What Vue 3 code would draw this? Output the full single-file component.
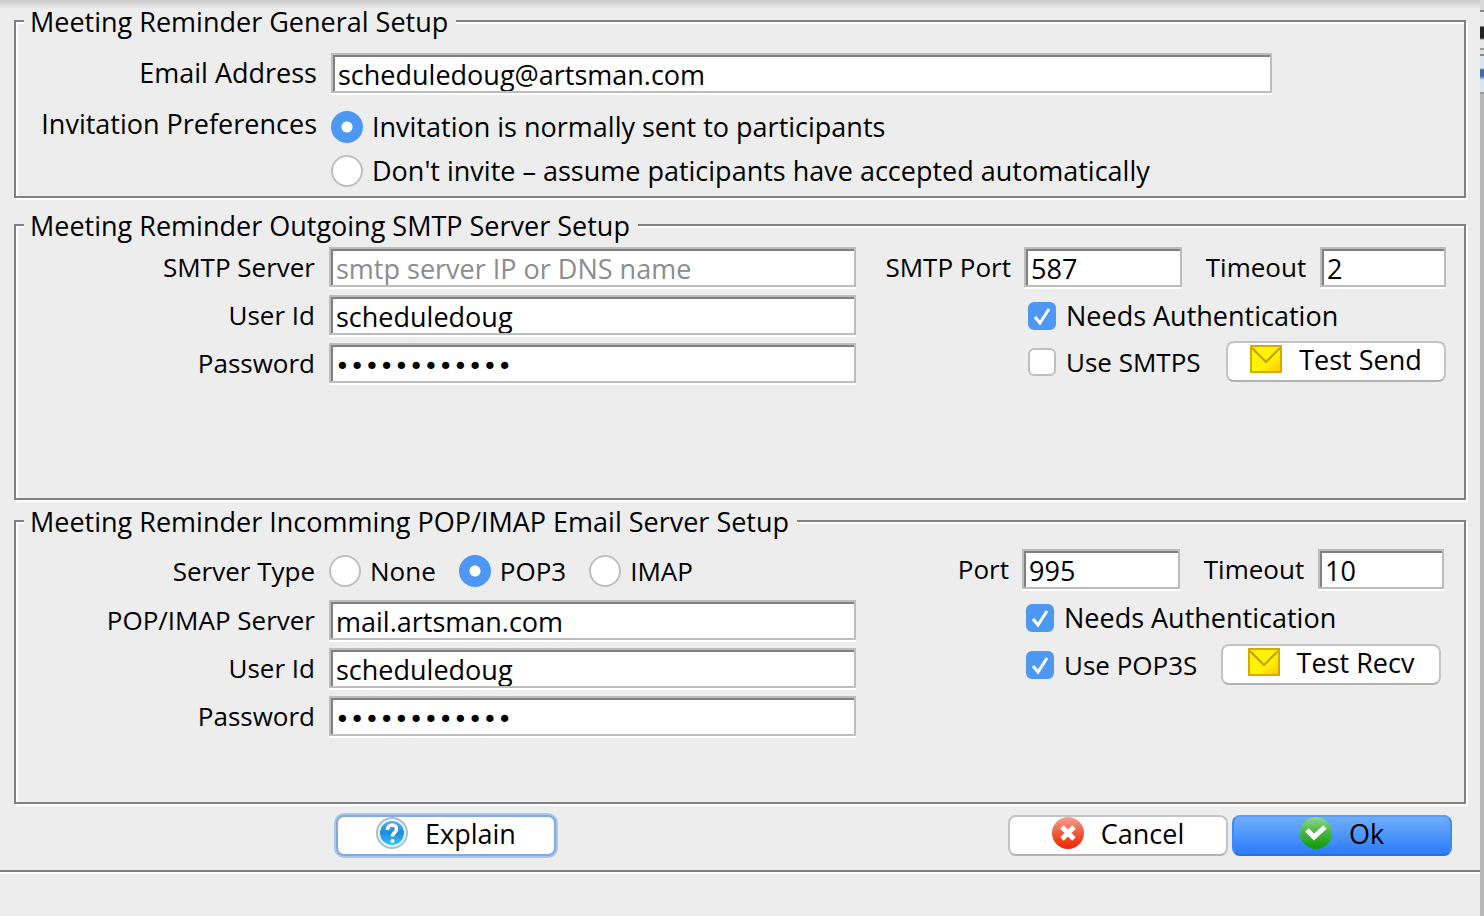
<script setup>
import { reactive } from 'vue'

const form = reactive({
  email: 'scheduledoug@artsman.com',
  invite: 'send',
  smtp: { server: '', user: 'scheduledoug', password: 'abcdefghijkl', port: '587', timeout: '2', auth: true, secure: false },
  pop: { type: 'pop3', server: 'mail.artsman.com', user: 'scheduledoug', password: 'abcdefghijkl', port: '995', timeout: '10', auth: true, secure: true },
})
</script>

<template>
  <div class="window">
    <form class="dialog" @submit.prevent>
      <div class="groups">
        <fieldset class="group general">
          <legend>Meeting Reminder General Setup</legend>
          <div class="row wide">
            <label class="name" for="email">Email Address</label>
            <input id="email" v-model="form.email" class="field" type="text">
          </div>
          <div class="row prefs" role="radiogroup" aria-labelledby="prefs">
            <span id="prefs" class="name">Invitation Preferences</span>
            <div class="stack">
              <label class="choice"><input v-model="form.invite" type="radio" name="invite" value="send">Invitation is normally sent to participants</label>
              <label class="choice"><input v-model="form.invite" type="radio" name="invite" value="assume">Don't invite – assume paticipants have accepted automatically</label>
            </div>
          </div>
        </fieldset>

        <fieldset class="group smtp">
          <legend>Meeting Reminder Outgoing SMTP Server Setup</legend>
          <div class="columns">
            <div class="account">
              <div class="row">
                <label class="name" for="smtp-server">SMTP Server</label>
                <input id="smtp-server" v-model="form.smtp.server" class="field" type="text" placeholder="smtp server IP or DNS name">
              </div>
              <div class="row">
                <label class="name" for="smtp-user">User Id</label>
                <input id="smtp-user" v-model="form.smtp.user" class="field" type="text">
              </div>
              <div class="row">
                <label class="name" for="smtp-password">Password</label>
                <input id="smtp-password" v-model="form.smtp.password" class="field" type="password" autocomplete="off">
              </div>
            </div>
            <div class="connection">
              <label class="name" for="smtp-port">SMTP Port</label>
              <div class="numbers">
                <input id="smtp-port" v-model="form.smtp.port" class="field port" type="text">
                <label for="smtp-timeout">Timeout</label>
                <input id="smtp-timeout" v-model="form.smtp.timeout" class="field timeout" type="text">
              </div>
              <label class="choice auth"><input v-model="form.smtp.auth" type="checkbox">Needs Authentication</label>
              <div class="secure">
                <label class="choice"><input v-model="form.smtp.secure" type="checkbox">Use SMTPS</label>
                <button type="button" class="button">
                  <svg viewBox="0 0 32 28" class="mail" aria-hidden="true">
                    <rect x="1" y="1" width="30" height="26" fill="url(#gold)" stroke="#d9a900" stroke-width="2" />
                    <path d="M2 3 16 17 30 3" fill="none" stroke="#c99a00" stroke-width="2" />
                  </svg>
                  Test Send
                </button>
              </div>
            </div>
          </div>
        </fieldset>

        <fieldset class="group pop">
          <legend>Meeting Reminder Incomming POP/IMAP Email Server Setup</legend>
          <div class="columns">
            <div class="account">
              <div class="row types" role="radiogroup" aria-labelledby="server-type">
                <span id="server-type" class="name">Server Type</span>
                <div class="options">
                  <label class="choice"><input v-model="form.pop.type" type="radio" name="type" value="none">None</label>
                  <label class="choice"><input v-model="form.pop.type" type="radio" name="type" value="pop3">POP3</label>
                  <label class="choice"><input v-model="form.pop.type" type="radio" name="type" value="imap">IMAP</label>
                </div>
              </div>
              <div class="row">
                <label class="name" for="pop-server">POP/IMAP Server</label>
                <input id="pop-server" v-model="form.pop.server" class="field" type="text">
              </div>
              <div class="row">
                <label class="name" for="pop-user">User Id</label>
                <input id="pop-user" v-model="form.pop.user" class="field" type="text">
              </div>
              <div class="row">
                <label class="name" for="pop-password">Password</label>
                <input id="pop-password" v-model="form.pop.password" class="field" type="password" autocomplete="off">
              </div>
            </div>
            <div class="connection">
              <label class="name" for="pop-port">Port</label>
              <div class="numbers">
                <input id="pop-port" v-model="form.pop.port" class="field port" type="text">
                <label for="pop-timeout">Timeout</label>
                <input id="pop-timeout" v-model="form.pop.timeout" class="field timeout" type="text">
              </div>
              <label class="choice auth"><input v-model="form.pop.auth" type="checkbox">Needs Authentication</label>
              <div class="secure">
                <label class="choice"><input v-model="form.pop.secure" type="checkbox">Use POP3S</label>
                <button type="button" class="button">
                  <svg viewBox="0 0 32 28" class="mail" aria-hidden="true">
                    <rect x="1" y="1" width="30" height="26" fill="url(#gold)" stroke="#d9a900" stroke-width="2" />
                    <path d="M2 3 16 17 30 3" fill="none" stroke="#c99a00" stroke-width="2" />
                  </svg>
                  Test Recv
                </button>
              </div>
            </div>
          </div>
        </fieldset>
      </div>

      <div class="actions">
        <button type="button" class="button focused">
          <svg viewBox="0 0 32 32" class="badge" aria-hidden="true">
            <circle cx="16" cy="16" r="15" fill="#eef7fd" stroke="#a5bfd2" stroke-width="2" />
            <circle cx="16" cy="16" r="12" fill="url(#sky)" />
            <path d="M11.500 13C11.500 6 21 6.500 20.500 12.500C20 16 16.500 15.500 16.500 19.500" fill="none" stroke="#fff" stroke-width="3.500" />
            <circle cx="16.500" cy="24" r="2" fill="#fff" />
          </svg>
          Explain
        </button>
        <div class="confirm">
          <button type="button" class="button">
            <svg viewBox="0 0 32 32" class="badge" aria-hidden="true">
              <circle cx="16" cy="16" r="16" fill="url(#red)" />
              <path d="M10 10 22 22M22 10 10 22" stroke="#fff" stroke-width="5" />
            </svg>
            Cancel
          </button>
          <button type="submit" class="button primary">
            <svg viewBox="0 0 32 32" class="badge" aria-hidden="true">
              <circle cx="16" cy="16" r="16" fill="url(#green)" />
              <path d="M7 13 14 20 25 10" fill="none" stroke="#fff" stroke-width="5" />
            </svg>
            Ok
          </button>
        </div>
      </div>
      <div class="status"></div>
    </form>
    <div class="behind" aria-hidden="true"></div>

    <svg class="defs" aria-hidden="true">
      <defs>
        <linearGradient id="gold" x1="0" y1="0" x2="1" y2="1">
          <stop offset="0" stop-color="#fff60a" /><stop offset="0.600" stop-color="#fff200" /><stop offset="1" stop-color="#ffc400" />
        </linearGradient>
        <linearGradient id="sky" x1="0" y1="0" x2="0" y2="1">
          <stop offset="0" stop-color="#5fabe0" /><stop offset="0.500" stop-color="#1b8ce0" /><stop offset="1" stop-color="#35c4ff" />
        </linearGradient>
        <linearGradient id="red" x1="0" y1="0" x2="0" y2="1">
          <stop offset="0" stop-color="#f5a293" /><stop offset="0.500" stop-color="#ef5a3c" /><stop offset="1" stop-color="#f02400" />
        </linearGradient>
        <linearGradient id="green" x1="0" y1="0" x2="0" y2="1">
          <stop offset="0" stop-color="#8fd98a" /><stop offset="0.500" stop-color="#45b53c" /><stop offset="1" stop-color="#0b9a06" />
        </linearGradient>
      </defs>
    </svg>
  </div>
</template>

<style>
body { background: #ededed; }
</style>

<style scoped>
.window {
  display: flex;
  min-height: 100vh;
  color: #000;
  font: 500 27px/30px "Lucida Grande", "Open Sans", "Noto Sans", sans-serif;
}
.window * { box-sizing: border-box; }
.dialog {
  flex: 1;
  min-width: 0;
  display: flex;
  flex-direction: column;
  background: linear-gradient(#cbcbcb, #ededed 9px);
}
.groups { padding: 4px 14px 0; }
.group {
  min-width: 0;
  margin: 0;
  padding: 0 18px 0 0;
  border: 2px solid #808080;
  box-shadow: inset 2px 2px 0 #fff, 2px 2px 0 #fff;
}
.general { height: 194px; }
.smtp { height: 292px; margin-top: 10px; }
.pop { height: 300px; margin-top: 4px; padding-right: 20px; }
legend {
  height: 34px;
  margin-left: 8px;
  padding: 3px 8px 0 6px;
  background: linear-gradient(transparent 10px, #ededed 10px);
}
.row { display: flex; align-items: center; gap: 14px; }
.row .name { flex: none; width: 299px; text-align: right; white-space: nowrap; }
.general .name { width: 301px; }
.columns .name, .numbers label, .options, .secure .choice { font-size: 26px; }
.wide { padding: 15px 174px 0 0; }
.prefs { align-items: flex-start; margin-top: 16px; }
.stack { display: flex; flex-direction: column; gap: 12px; padding-top: 2px; }
.field {
  width: 100%;
  min-width: 0;
  height: 40px;
  padding: 2px 5px 0;
  border: 2px solid #bdbdbd;
  border-radius: 0;
  outline: 0;
  background: #fff;
  color: #000;
  box-shadow: inset 2px 2px 0 #808080, 0 2px 0 #fff;
  font: inherit;
}
.field[type="password"] { padding: 6px 4px 0; font-family: "DejaVu Sans", sans-serif; font-size: 25px; }
.field::placeholder { color: #8c8c8c; opacity: 1; }
.columns { display: flex; justify-content: space-between; gap: 14px; padding-top: 5px; }
.account { flex: 1; min-width: 0; display: flex; flex-direction: column; gap: 8px; }
.connection {
  flex: none;
  width: 576px;
  display: grid;
  grid-template-columns: 1fr 422px;
  column-gap: 13px;
  align-content: start;
}
.connection .name { text-align: right; line-height: 40px; }
.numbers { display: flex; align-items: center; justify-content: space-between; }
.numbers .port { flex: none; width: 158px; margin-right: 10px; }
.numbers .timeout { flex: none; width: 126px; }
.auth { grid-column: 2; margin-top: 14px; padding-left: 4px; }
.secure {
  grid-column: 2;
  display: flex;
  align-items: center;
  justify-content: space-between;
  margin-top: 10px;
  padding-left: 4px;
}
.choice { display: flex; align-items: center; gap: 10px; white-space: nowrap; }
.choice input {
  flex: none;
  appearance: none;
  margin: 0;
  border: 2px solid #bfbfbf;
  background: #fff;
}
.choice input[type="radio"] { width: 32px; height: 32px; margin-right: -1px; border-radius: 50%; }
.choice input[type="radio"]:checked {
  border-color: #4d97f5;
  background: radial-gradient(circle, #fff 5px, #4d97f5 6px);
}
.choice input[type="checkbox"] { width: 28px; height: 28px; border-radius: 6px; }
.choice input[type="checkbox"]:checked {
  border-color: #4d97f5;
  background: #4d97f5 url("data:image/svg+xml,%3Csvg xmlns='http://www.w3.org/2000/svg' viewBox='0 0 24 24'%3E%3Cpath d='M5 13l5 6L19 5' fill='none' stroke='white' stroke-width='3'/%3E%3C/svg%3E") center / 24px 24px no-repeat;
}
.types { height: 43px; }
.options { display: flex; gap: 23px; }
.pop .columns { padding-top: 11px; }
.pop .connection { width: 574px; }
.pop .secure { margin-top: 11px; padding-right: 3px; }
.button {
  display: flex;
  align-items: center;
  justify-content: center;
  gap: 17px;
  width: 220px;
  height: 41px;
  padding: 0 0 3px;
  border: 2px solid #c4c4c4;
  border-bottom-color: #b2b2b2;
  border-radius: 8px;
  background: #fff;
  color: #000;
  font: inherit;
  white-space: nowrap;
}
.button svg { flex: none; margin-bottom: 3px; }
.mail { width: 32px; height: 28px; }
.badge { width: 32px; height: 32px; }
.actions { display: flex; justify-content: space-between; padding: 11px 28px 14px 336px; }
.confirm { display: flex; gap: 4px; }
.focused { border-color: #84a9e0; box-shadow: 0 0 0 2px #a9c6ee; }
.primary {
  border-color: #5b9df6 #3f88f6 #2b70e0;
  background: linear-gradient(#6eaef8, #2b7cfb);
}
.status { flex: 1; border-top: 2px solid #808080; box-shadow: inset 0 2px 0 #fff; }
.behind {
  flex: none;
  width: 4px;
  background: linear-gradient(#d9d9d9 10px, #888 10px 12px, #e8e8e8 12px 26px, #222 27px 38px, #e8e8e8 40px 48px, #999 48px 50px, #ddd 50px 54px, #888 54px 56px, #d8e6f0 56px 68px, #3a6ea5 70px 76px, #d8e6f0 80px 92px, #999 92px 94px, #b8b8b8 94px);
}
.defs { position: absolute; width: 0; height: 0; }
</style>
